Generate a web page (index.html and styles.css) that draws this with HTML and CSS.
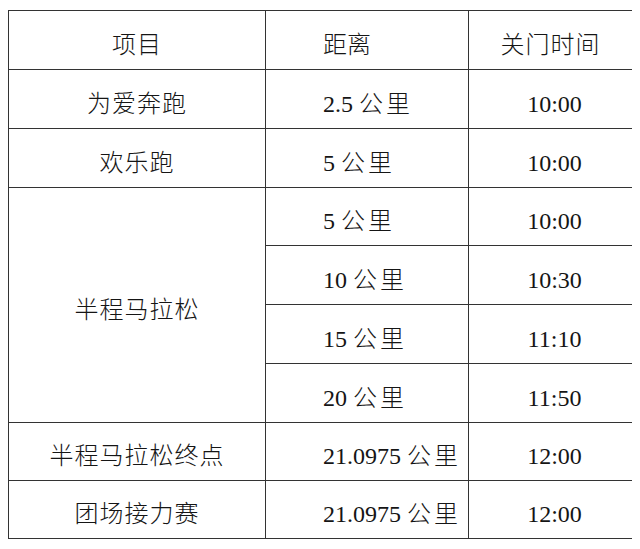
FILE: index.html
```html
<!DOCTYPE html>
<html lang="zh-CN">
<head>
<meta charset="utf-8">
<title>关门时间</title>
<link rel="stylesheet" href="styles.css">
</head>
<body>
<table class="schedule">
  <colgroup>
    <col class="c-item">
    <col class="c-dist">
    <col class="c-time">
  </colgroup>
  <thead>
    <tr class="r59">
      <th class="item">项目</th>
      <th class="dist">距离</th>
      <th class="head-time">关门时间</th>
    </tr>
  </thead>
  <tbody>
    <tr class="r59">
      <td class="item">为爱奔跑</td>
      <td class="dist">2.5 <span class="unit">公里</span></td>
      <td class="time">10:00</td>
    </tr>
    <tr class="r59">
      <td class="item">欢乐跑</td>
      <td class="dist">5 <span class="unit">公里</span></td>
      <td class="time">10:00</td>
    </tr>
    <tr class="r58">
      <td class="item" rowspan="4">半程马拉松</td>
      <td class="dist">5 <span class="unit">公里</span></td>
      <td class="time">10:00</td>
    </tr>
    <tr class="r59">
      <td class="dist">10 <span class="unit">公里</span></td>
      <td class="time">10:30</td>
    </tr>
    <tr class="r59">
      <td class="dist">15 <span class="unit">公里</span></td>
      <td class="time">11:10</td>
    </tr>
    <tr class="r59">
      <td class="dist">20 <span class="unit">公里</span></td>
      <td class="time">11:50</td>
    </tr>
    <tr class="r58">
      <td class="item">半程马拉松终点</td>
      <td class="dist">21.0975 <span class="unit">公里</span></td>
      <td class="time">12:00</td>
    </tr>
    <tr class="r58">
      <td class="item">团场接力赛</td>
      <td class="dist">21.0975 <span class="unit">公里</span></td>
      <td class="time">12:00</td>
    </tr>
  </tbody>
</table>
</body>
</html>
```

FILE: styles.css
```css
html, body {
  background: #ffffff;
}
body {
  margin: 10px 8px;
  font-family: "Liberation Serif", "Noto Sans CJK SC", serif;
  color: #151515;
}
.schedule {
  border-collapse: collapse;
  table-layout: fixed;
  width: 625px;
  font-size: 24px;
  border: 1px solid #1a1a1a;
}
.c-item { width: 257px; }
.c-dist { width: 203px; }
.c-time { width: 164px; }
.schedule th,
.schedule td {
  border: 1px solid #333333;
  padding: 9px 0 0 0;
  font-weight: 300;
  line-height: 1;
  vertical-align: middle;
  white-space: nowrap;
}
.r59 { height: 59px; }
.r58 { height: 58px; }
.item {
  text-align: center;
  letter-spacing: 1px;
}
.dist {
  text-align: left;
  padding-left: 57px !important;
}
.unit {
  letter-spacing: 3px;
}
.head-time {
  text-align: center;
  letter-spacing: 1px;
}
.time {
  text-align: center;
  padding-left: 8px !important;
}
```
